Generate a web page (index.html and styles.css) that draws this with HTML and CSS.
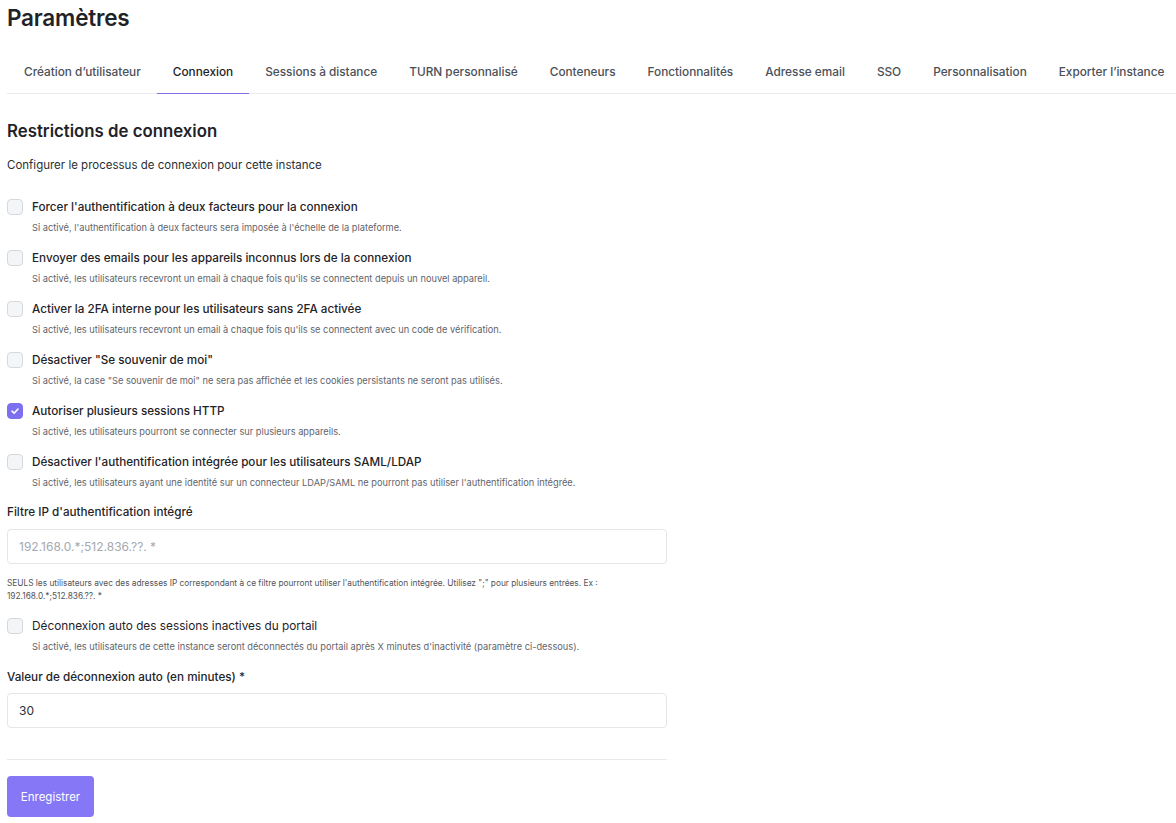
FILE: index.html
```html
<!DOCTYPE html>
<html lang="fr">

<head>
    <meta charset="UTF-8">
    <title>Paramètres</title>
    <link rel="stylesheet" href="styles.css">
</head>

<body>
    <h1 class="title">Paramètres</h1>

    <ul class="tabs">
        <li>Création d’utilisateur</li>
        <li class="active">Connexion</li>
        <li>Sessions à distance</li>
        <li>TURN personnalisé</li>
        <li>Conteneurs</li>
        <li>Fonctionnalités</li>
        <li>Adresse email</li>
        <li>SSO</li>
        <li>Personnalisation</li>
        <li>Exporter l’instance</li>
    </ul>

    <div class="form">
        <h2 class="heading">Restrictions de connexion</h2>
        <p class="intro">Configurer le processus de connexion pour cette instance</p>

        <div class="checks">
            <div class="check">
                <div class="check-row">
                    <span class="box"></span>
                    <span class="check-label">Forcer l'authentification à deux facteurs pour la connexion</span>
                </div>
                <p class="check-help">Si activé, l'authentification à deux facteurs sera imposée à l'échelle de la plateforme.</p>
            </div>
            <div class="check">
                <div class="check-row">
                    <span class="box"></span>
                    <span class="check-label">Envoyer des emails pour les appareils inconnus lors de la connexion</span>
                </div>
                <p class="check-help">Si activé, les utilisateurs recevront un email à chaque fois qu'ils se connectent depuis un nouvel appareil.</p>
            </div>
            <div class="check">
                <div class="check-row">
                    <span class="box"></span>
                    <span class="check-label">Activer la 2FA interne pour les utilisateurs sans 2FA activée</span>
                </div>
                <p class="check-help">Si activé, les utilisateurs recevront un email à chaque fois qu'ils se connectent avec un code de vérification.</p>
            </div>
            <div class="check">
                <div class="check-row">
                    <span class="box"></span>
                    <span class="check-label">Désactiver "Se souvenir de moi"</span>
                </div>
                <p class="check-help">Si activé, la case "Se souvenir de moi" ne sera pas affichée et les cookies persistants ne seront pas utilisés.</p>
            </div>
            <div class="check">
                <div class="check-row">
                    <span class="box checked">
                        <svg width="10" height="10" viewBox="0 0 10 10"><path d="M2 5.2 4.1 7.2 8 3" fill="none" stroke="#fff" stroke-width="1.6" stroke-linecap="round" stroke-linejoin="round"/></svg>
                    </span>
                    <span class="check-label">Autoriser plusieurs sessions HTTP</span>
                </div>
                <p class="check-help">Si activé, les utilisateurs pourront se connecter sur plusieurs appareils.</p>
            </div>
            <div class="check">
                <div class="check-row">
                    <span class="box"></span>
                    <span class="check-label">Désactiver l'authentification intégrée pour les utilisateurs SAML/LDAP</span>
                </div>
                <p class="check-help">Si activé, les utilisateurs ayant une identité sur un connecteur LDAP/SAML ne pourront pas utiliser l'authentification intégrée.</p>
            </div>
        </div>

        <div class="field">
            <label class="field-label">Filtre IP d'authentification intégré</label>
            <input class="input" type="text" placeholder="192.168.0.*;512.836.??. *">
            <p class="field-help">SEULS les utilisateurs avec des adresses IP correspondant à ce filtre pourront utiliser l'authentification intégrée. Utilisez ";" pour plusieurs entrées. Ex : 192.168.0.*;512.836.??. *</p>
        </div>

        <div class="check check-auto">
            <div class="check-row">
                <span class="box"></span>
                <span class="check-label light">Déconnexion auto des sessions inactives du portail</span>
            </div>
            <p class="check-help">Si activé, les utilisateurs de cette instance seront déconnectés du portail après X minutes d'inactivité (paramètre ci-dessous).</p>
        </div>

        <div class="field field-timeout">
            <label class="field-label">Valeur de déconnexion auto (en minutes) *</label>
            <input class="input" type="text" value="30">
        </div>

        <div class="actions">
            <button class="btn">Enregistrer</button>
        </div>
    </div>
</body>

</html>
```

FILE: styles.css
```css
* {
    margin: 0;
    padding: 0;
    list-style: none;
    box-sizing: border-box;
}

body {
    font-family: Inter, "Noto Sans", sans-serif;
    color: #1f2328;
    background: #fff;
    padding: 0 7px;
    overflow: hidden;
}

.title {
    font-size: 22.5px;
    font-weight: 600;
    line-height: 28px;
    margin-top: 4px;
    letter-spacing: -0.2px;
}

.tabs {
    display: flex;
    margin-top: 18px;
    border-bottom: 1px solid #e9eaec;
    white-space: nowrap;
    width: 1200px;
}

.tabs li {
    padding: 12px 16px 11px;
    font-size: 11.8px;
    font-weight: 500;
    line-height: 20px;
    color: #4b5058;
}

.tabs li:first-child {
    padding-left: 17px;
}

.tabs li.active {
    color: #1f2328;
    border-bottom: 1px solid #7e72e6;
    margin-bottom: -1px;
    padding-bottom: 11px;
}

.form {
    width: 660px;
}

.heading {
    font-size: 16.8px;
    font-weight: 600;
    line-height: 24px;
    margin-top: 25px;
}

.intro {
    font-size: 11.5px;
    line-height: 18px;
    margin-top: 13px;
    color: #2b2f35;
}

.checks {
    margin-top: 24px;
    display: flex;
    flex-direction: column;
    gap: 14px;
}

.check-row {
    display: flex;
    align-items: center;
    gap: 9px;
    height: 18px;
}

.box {
    width: 16px;
    height: 16px;
    border: 1px solid #d5d9de;
    border-radius: 4px;
    background: #f3f5f7;
    display: flex;
    align-items: center;
    justify-content: center;
    flex-shrink: 0;
}

.box.checked {
    background: #7e6ff0;
    border-color: #7e6ff0;
}

.check-label {
    font-size: 11.7px;
    font-weight: 500;
    color: #1f2328;
}

.check-label.light {
    font-size: 11.8px;
    font-weight: 400;
}

.check-help {
    font-size: 9.25px;
    line-height: 14px;
    margin-top: 5px;
    padding-left: 25px;
    color: #5f646b;
}

.field {
    margin-top: 13px;
}

.field-label {
    display: block;
    font-size: 11.7px;
    font-weight: 500;
    line-height: 18px;
}

.input {
    display: block;
    width: 100%;
    height: 35px;
    margin-top: 8px;
    border: 1px solid #e4e6e9;
    border-radius: 4px;
    padding: 0 11px;
    font-family: inherit;
    font-size: 12px;
    color: #2b2f35;
    outline: none;
}

.input::placeholder {
    color: #a5a9af;
}

.field-help {
    font-size: 8.3px;
    line-height: 13px;
    margin-top: 13px;
    color: #4f545b;
}

.check-auto {
    margin-top: 14px;
}

.field-timeout {
    margin-top: 14px;
}

.field-timeout .input {
    margin-top: 7px;
}

.actions {
    margin-top: 31px;
    border-top: 1px solid #e9eaec;
    padding-top: 16px;
}

.btn {
    width: 87px;
    height: 41px;
    border: none;
    border-radius: 4px;
    background: #8577f5;
    color: #fff;
    font-family: inherit;
    font-size: 11.5px;
}
```
